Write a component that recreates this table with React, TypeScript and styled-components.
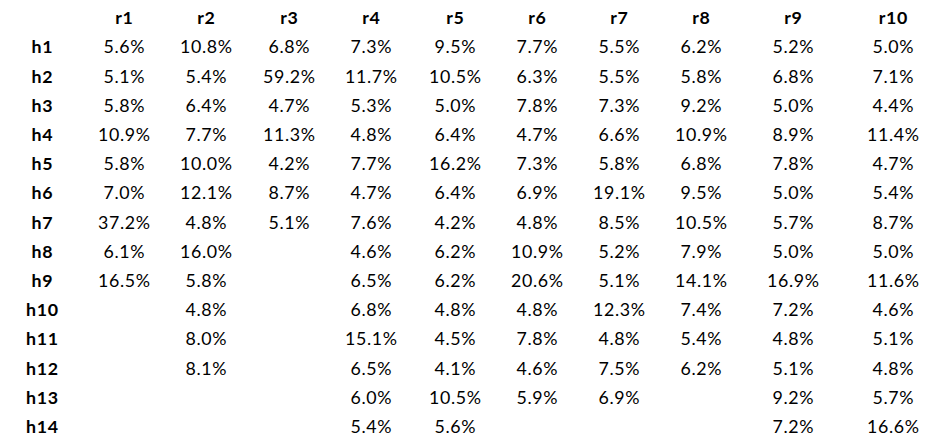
import React from "react";
import styled, { createGlobalStyle } from "styled-components";

const GlobalStyle = createGlobalStyle`
  html, body {
    margin: 0;
    padding: 0;
    background: #ffffff;
  }
  body {
    font-family: Lato, "Open Sans", sans-serif;
    color: #000000;
  }
`;

const Table = styled.div`
  display: grid;
  grid-template-columns: 84px 80px 84px 82px 82px 86px 78px 86px 78px 106px 94px;
  grid-auto-rows: 29.2px;
  padding-top: 3.6px;
  width: 944px;
`;

const Cell = styled.div<{ $head?: boolean }>`
  display: flex;
  align-items: center;
  justify-content: center;
  font-size: 17.8px;
  letter-spacing: 0.7px;
  text-indent: 0.7px;
  font-weight: ${(p) => (p.$head ? 700 : 400)};
  color: #000000;
  white-space: nowrap;
  line-height: 1;
`;

const cols = ["r1", "r2", "r3", "r4", "r5", "r6", "r7", "r8", "r9", "r10"];

const rows: [string, string[]][] = [
  ["h1", ["5.6", "10.8", "6.8", "7.3", "9.5", "7.7", "5.5", "6.2", "5.2", "5.0"]],
  ["h2", ["5.1", "5.4", "59.2", "11.7", "10.5", "6.3", "5.5", "5.8", "6.8", "7.1"]],
  ["h3", ["5.8", "6.4", "4.7", "5.3", "5.0", "7.8", "7.3", "9.2", "5.0", "4.4"]],
  ["h4", ["10.9", "7.7", "11.3", "4.8", "6.4", "4.7", "6.6", "10.9", "8.9", "11.4"]],
  ["h5", ["5.8", "10.0", "4.2", "7.7", "16.2", "7.3", "5.8", "6.8", "7.8", "4.7"]],
  ["h6", ["7.0", "12.1", "8.7", "4.7", "6.4", "6.9", "19.1", "9.5", "5.0", "5.4"]],
  ["h7", ["37.2", "4.8", "5.1", "7.6", "4.2", "4.8", "8.5", "10.5", "5.7", "8.7"]],
  ["h8", ["6.1", "16.0", "", "4.6", "6.2", "10.9", "5.2", "7.9", "5.0", "5.0"]],
  ["h9", ["16.5", "5.8", "", "6.5", "6.2", "20.6", "5.1", "14.1", "16.9", "11.6"]],
  ["h10", ["", "4.8", "", "6.8", "4.8", "4.8", "12.3", "7.4", "7.2", "4.6"]],
  ["h11", ["", "8.0", "", "15.1", "4.5", "7.8", "4.8", "5.4", "4.8", "5.1"]],
  ["h12", ["", "8.1", "", "6.5", "4.1", "4.6", "7.5", "6.2", "5.1", "4.8"]],
  ["h13", ["", "", "", "6.0", "10.5", "5.9", "6.9", "", "9.2", "5.7"]],
  ["h14", ["", "", "", "5.4", "5.6", "", "", "", "7.2", "16.6"]],
];

export default function App() {
  return (
    <>
      <GlobalStyle />
      <Table>
        <Cell $head />
        {cols.map((c) => (
          <Cell key={c} $head>
            {c}
          </Cell>
        ))}
        {rows.map(([h, vals]) => (
          <React.Fragment key={h}>
            <Cell $head>{h}</Cell>
            {vals.map((v, i) => (
              <Cell key={i}>{v ? `${v}%` : ""}</Cell>
            ))}
          </React.Fragment>
        ))}
      </Table>
    </>
  );
}
